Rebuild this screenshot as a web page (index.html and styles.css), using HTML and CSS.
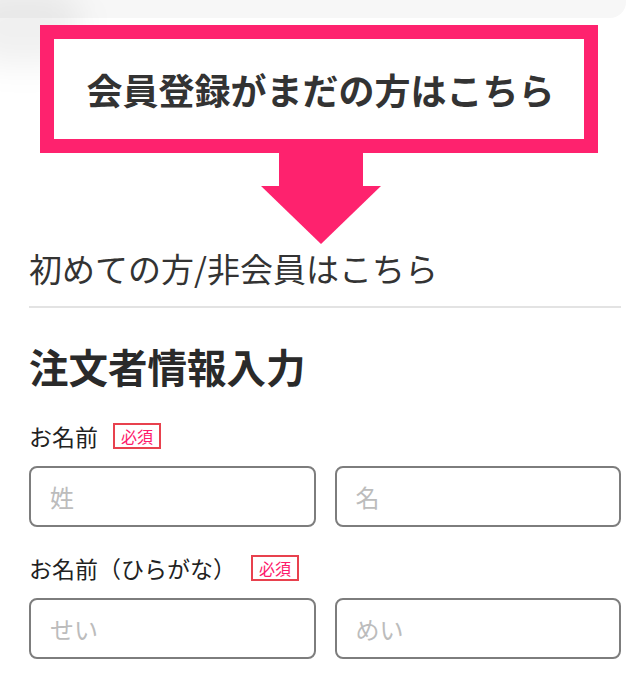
FILE: index.html
```html
<!DOCTYPE html>
<html lang="ja">
<head>
<meta charset="utf-8">
<title>注文者情報入力</title>
<link rel="stylesheet" href="styles.css">
</head>
<body>
<div class="top-strip"></div>
<div class="banner"><span class="banner-text">会員登録がまだの方はこちら</span></div>
<div class="arrow">
  <svg width="120" height="91" viewBox="0 0 120 91"><rect x="18" y="0" width="84" height="34" fill="#fe226e"/><polygon points="0,33 120,33 60,91" fill="#fe226e"/></svg>
</div>
<main class="content">
  <div class="guest-title">初めての方/非会員はこちら</div>
  <h1 class="heading">注文者情報入力</h1>
  <div class="field">
    <div class="label-row"><span class="label">お名前</span><span class="badge">必須</span></div>
    <div class="inputs">
      <input class="input" placeholder="姓">
      <input class="input" placeholder="名">
    </div>
  </div>
  <div class="field">
    <div class="label-row"><span class="label">お名前（ひらがな）</span><span class="badge">必須</span></div>
    <div class="inputs">
      <input class="input" placeholder="せい">
      <input class="input" placeholder="めい">
    </div>
  </div>
</main>
</body>
</html>
```
FILE: styles.css
```css
* { box-sizing: border-box; }
html, body { margin: 0; padding: 0; background: #fff; }
body {
  font-family: "Noto Sans CJK JP", "Noto Sans", sans-serif;
  color: #333;
  width: 640px;
  overflow: hidden;
}
.top-strip {
  position: relative;
  height: 18px;
  width: 626px;
  background: #f7f7f7;
  border-bottom-right-radius: 16px;
}
.top-strip::before {
  content: "";
  position: absolute;
  left: -30px;
  top: -10px;
  width: 110px;
  height: 75px;
  background: rgba(0,0,0,0.06);
  filter: blur(16px);
  border-radius: 30px;
}
.banner {
  position: relative;
  margin: 7px 42px 0 40px;
  border: 14px solid #fe226e;
  height: 128px;
  display: flex;
  align-items: center;
  justify-content: center;
  background: #fff;
}
.banner-text {
  font-size: 36px;
  font-weight: 700;
  color: #333;
  line-height: 1;
  padding-left: 3px;
}
.arrow {
  display: flex;
  justify-content: center;
  padding-left: 1px;
  height: 91px;
}
.arrow svg { display: block; }
.content {
  padding: 0 19px 40px 29px;
}
.guest-title {
  margin-top: 4px;
  font-size: 33px;
  line-height: 40px;
  font-weight: 400;
  color: #333;
  padding-bottom: 18px;
  border-bottom: 2px solid #e3e3e3;
}
.heading {
  margin: 35px 0 0;
  font-size: 39.5px;
  line-height: 46px;
  font-weight: 700;
  color: #2a2a2a;
}
.field { margin-top: 32px; }
.field + .field { margin-top: 26px; }
.label-row {
  display: flex;
  align-items: center;
  gap: 15px;
  height: 30px;
}
.label {
  font-size: 23px;
  line-height: 30px;
  color: #222;
}
.badge {
  border: 2px solid #e8414e;
  color: #fe1a6b;
  font-size: 16px;
  line-height: 22px;
  padding: 0 6px;
  height: 26px;
}
.inputs {
  display: grid;
  grid-template-columns: 1fr 1fr;
  gap: 19px;
  margin-top: 15px;
}
.input {
  height: 61px;
  border: 2px solid #7d7d7d;
  border-radius: 8px;
  padding: 0 19px;
  font-family: "Noto Sans CJK JP", sans-serif;
  font-size: 24px;
  color: #333;
  background: #fff;
  width: 100%;
  outline: none;
}
.input::placeholder { color: #bcbcbc; }
```
